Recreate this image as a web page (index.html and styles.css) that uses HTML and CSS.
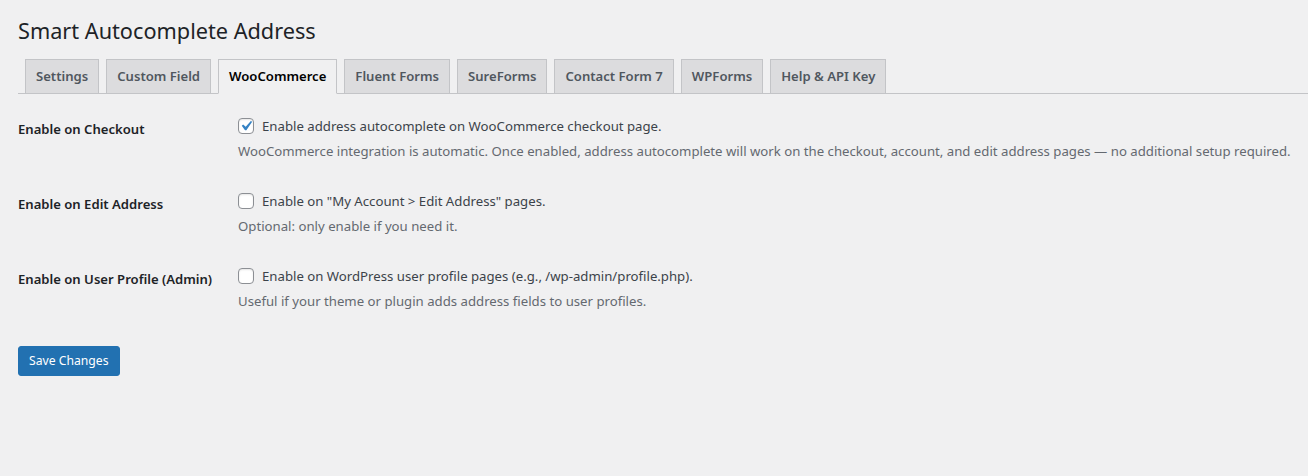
FILE: index.html
```html
<!DOCTYPE html>
<html lang="en">
<head>
  <meta charset="UTF-8" />
  <meta name="viewport" content="width=device-width, initial-scale=1.0"/>
  <title>Smart Autocomplete Address</title>
  <link rel="stylesheet" href="styles.css">
</head>
<body>
  <div class="wrap">
    <h1>Smart Autocomplete Address</h1>

    <nav class="nav-tab-wrapper">
      <a href="#" class="nav-tab">Settings</a>
      <a href="#" class="nav-tab">Custom Field</a>
      <a href="#" class="nav-tab nav-tab-active">WooCommerce</a>
      <a href="#" class="nav-tab">Fluent Forms</a>
      <a href="#" class="nav-tab">SureForms</a>
      <a href="#" class="nav-tab">Contact Form 7</a>
      <a href="#" class="nav-tab">WPForms</a>
      <a href="#" class="nav-tab">Help &amp; API Key</a>
    </nav>

    <form>
      <table class="form-table">
        <tbody>
          <tr>
            <th>Enable on Checkout</th>
            <td>
              <label><input type="checkbox" checked> Enable address autocomplete on WooCommerce checkout page.</label>
              <p class="description">WooCommerce integration is automatic. Once enabled, address autocomplete will work on the checkout, account, and edit address pages — no additional setup required.</p>
            </td>
          </tr>
          <tr>
            <th>Enable on Edit Address</th>
            <td>
              <label><input type="checkbox"> Enable on "My Account &gt; Edit Address" pages.</label>
              <p class="description">Optional: only enable if you need it.</p>
            </td>
          </tr>
          <tr>
            <th>Enable on User Profile (Admin)</th>
            <td>
              <label><input type="checkbox"> Enable on WordPress user profile pages (e.g., /wp-admin/profile.php).</label>
              <p class="description">Useful if your theme or plugin adds address fields to user profiles.</p>
            </td>
          </tr>
        </tbody>
      </table>

      <p class="submit">
        <button type="submit" class="button-primary">Save Changes</button>
      </p>
    </form>
  </div>
</body>
</html>
```

FILE: styles.css
```css
body {
  margin: 0;
  background: #f0f0f1;
  color: #3c434a;
  font-family: "Noto Sans", "Open Sans", sans-serif;
  font-size: 13.2px;
  line-height: 20px;
}

.wrap {
  padding: 7px 0 0 18px;
}

h1 {
  margin: 0;
  padding: 9px 0 4px;
  font-size: 21.7px;
  font-weight: 400;
  line-height: 30px;
  color: #1d2327;
}

.nav-tab-wrapper {
  display: flex;
  padding-top: 9px;
  border-bottom: 1px solid #c3c4c7;
}

.nav-tab {
  margin-left: 7px;
  margin-bottom: -1px;
  padding: 5px 10px;
  border: 1px solid #c3c4c7;
  background: #dcdcde;
  color: #50575e;
  font-size: 13.1px;
  font-weight: 600;
  line-height: 23px;
  text-decoration: none;
  white-space: nowrap;
}

.nav-tab-active {
  background: #f0f0f1;
  border-bottom-color: #f0f0f1;
  color: #000;
}

.form-table {
  margin-top: 7px;
  border-collapse: collapse;
}

.form-table th {
  width: 200px;
  padding: 19px 10px 20px 0;
  text-align: left;
  vertical-align: top;
  font-size: 13.1px;
  font-weight: 600;
  line-height: 18px;
  color: #1d2327;
  white-space: nowrap;
}

.form-table td {
  padding: 15px 10px;
  line-height: 20px;
  vertical-align: middle;
}

.form-table label {
  display: flex;
  align-items: center;
}

input[type="checkbox"] {
  appearance: none;
  position: relative;
  width: 16px;
  height: 16px;
  margin: 0 8px 0 0;
  border: 1px solid #8c8f94;
  border-radius: 4px;
  background: #fff;
  box-shadow: inset 0 1px 2px rgba(0, 0, 0, 0.1);
  flex-shrink: 0;
}

/* the dashicons tick, cut out of a blue square */
input[type="checkbox"]:checked::before {
  content: "";
  position: absolute;
  top: -3px;
  left: -3px;
  width: 20px;
  height: 20px;
  background: #3582c4;
  clip-path: path("M14.83 4.89l1.34.94-5.81 8.38H9.02L5.78 9.67l1.34-1.25 2.57 2.4z");
}

.description {
  margin: 5px 0 0;
  color: #646970;
}

.submit {
  margin: 20px 0 0;
}

.button-primary {
  min-height: 30px;
  padding: 0 10px;
  border: 1px solid #2271b1;
  border-radius: 3px;
  background: #2271b1;
  color: #fff;
  font-family: inherit;
  font-size: 12.2px;
  line-height: 28px;
  cursor: pointer;
}
```
